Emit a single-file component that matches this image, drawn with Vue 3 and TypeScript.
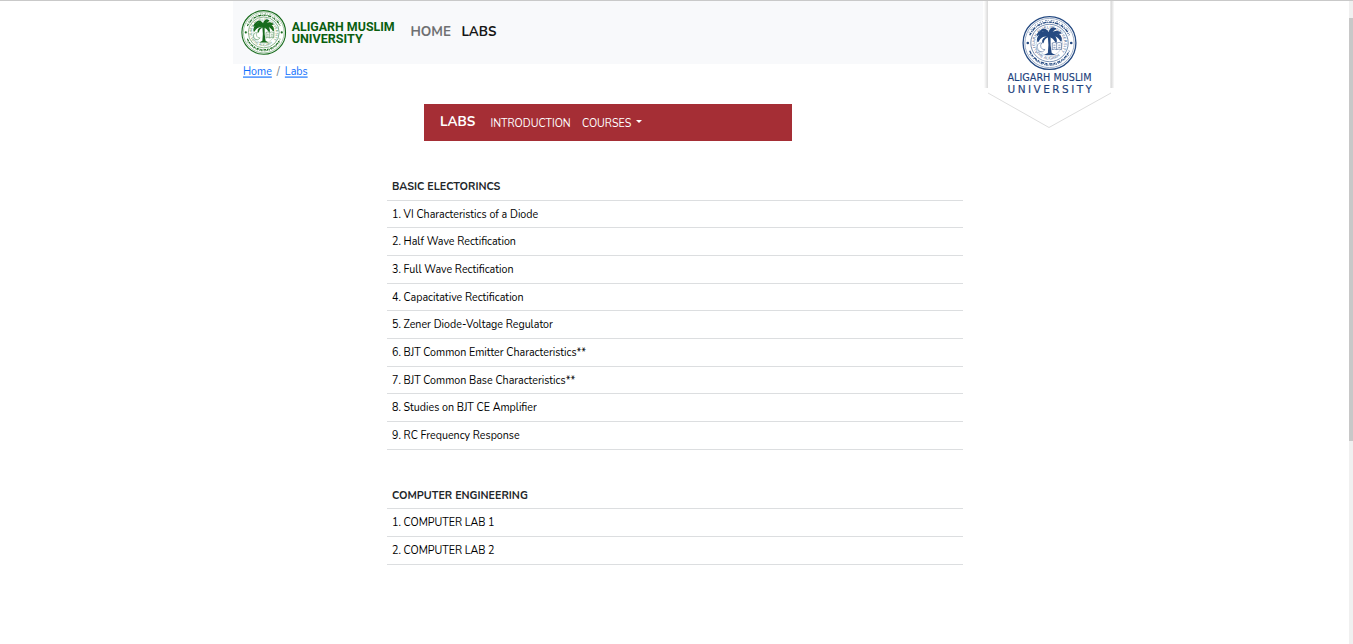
<script setup lang="ts">
interface Group { title: string; labs: string[] }

const groups: Group[] = [
  {
    title: 'BASIC ELECTORINCS',
    labs: [
      'VI Characteristics of a Diode',
      'Half Wave Rectification',
      'Full Wave Rectification',
      'Capacitative Rectification',
      'Zener Diode-Voltage Regulator',
      'BJT Common Emitter Characteristics**',
      'BJT Common Base Characteristics**',
      'Studies on BJT CE Amplifier',
      'RC Frequency Response',
    ],
  },
  {
    title: 'COMPUTER ENGINEERING',
    labs: ['COMPUTER LAB 1', 'COMPUTER LAB 2'],
  },
]
</script>

<template>
  <div class="page">
    <svg class="defs" width="0" height="0" aria-hidden="true">
      <defs>
        <path id="ringTop" d="M29.6 66.5A26.2 26.2 0 1 1 70.4 66.5" />
        <path id="ringBottom" d="M23.2 64A30.4 30.4 0 0 0 76.8 64" />
        <symbol id="seal" viewBox="0 0 100 100">
          <circle cx="50" cy="50" r="48" fill="#fff" stroke="currentColor" stroke-width="2.4" />
          <circle cx="50" cy="50" r="44.8" fill="none" stroke="currentColor" stroke-width="1" opacity=".8" />
          <circle cx="50" cy="50" r="34" fill="none" stroke="currentColor" stroke-width="1.3" opacity=".85" />
          <circle cx="50" cy="50" r="23.5" fill="none" stroke="currentColor" stroke-width="1" opacity=".4" />
          <g fill="none" stroke="currentColor">
            <path d="M14 36A39 39 0 0 1 86 36" stroke-width="2.4" stroke-dasharray="5 2 2 1.5 7 2 1 2" />
            <path d="M17 33A37 37 0 0 1 83 33" stroke-width="1.4" stroke-dasharray="2 3 4 2 1 3" />
            <path d="M13 31A42 42 0 0 1 87 31" stroke-width="1.4" stroke-dasharray="1.5 4 3 2" />
            <path d="M14 64A39 39 0 0 0 86 64" stroke-width="2.4" stroke-dasharray="6 2 3 1 1 2" />
            <path d="M16 68A37 37 0 0 0 84 68" stroke-width="1.4" stroke-dasharray="2 2 4 3" />
            <path d="M14 70A42 42 0 0 0 86 70" stroke-width="1.4" stroke-dasharray="3 3 1 2" />
          </g>
          <g fill="currentColor" font-family="DejaVu Sans, sans-serif" font-size="7" opacity=".85">
            <text textLength="116"><textPath href="#ringTop">ALIGARH MUSLIM UNIVERSITY</textPath></text>
            <text textLength="48"><textPath href="#ringBottom" startOffset="5">THE ALIGARH</textPath></text>
          </g>
          <circle cx="10.5" cy="50" r="2.4" fill="currentColor" />
          <circle cx="89.5" cy="50" r="2.4" fill="currentColor" />
          <path d="M36 50a8 8 0 1 0 6 12a7 7 0 0 1-6-12Z" fill="none" stroke="currentColor" stroke-width="1.2" opacity=".7" />
          <path d="M55 50q4-2 8 0q4-2 9 0v12q-5-2-9 0q-4-2-8 0ZM63 50v12M57 54h4M57 58h4M66 54h4M66 58h4" fill="none" stroke="currentColor" stroke-width="1.3" opacity=".75" />
          <path d="M47 39L52 38Q51 53 54 68L61 72H40L47 68Q49 53 47 39Z" fill="currentColor" />
          <path d="M49 38Q36 34 29 47Q27 37 36 34Q30 32 28 36Q30 28 39 30Q44 31 48 35Q41 24 34 28Q42 20 49 33Q51 20 61 24Q55 26 52 34Q62 25 70 32Q65 32 61 33Q72 34 71 46Q65 36 56 36Q63 40 62 48Q57 40 51 38Q41 38 38 49Q36 41 49 38Z" fill="currentColor" stroke="currentColor" stroke-width="2.6" stroke-linejoin="round" />
        </symbol>
      </defs>
    </svg>

    <header class="header">
      <a class="brand">
        <svg width="47" height="47" role="img">
          <use class="green" href="#seal" x="0" y="1.7" width="45.5" height="45.5" />
        </svg>
        <svg class="wordmark" width="108" height="47" role="img">
          <text x="3.7" y="23.2" textLength="103" lengthAdjust="spacingAndGlyphs">ALIGARH MUSLIM</text>
          <text x="3.7" y="35.3" textLength="71" lengthAdjust="spacingAndGlyphs">UNIVERSITY</text>
        </svg>
      </a>
      <nav class="primary">
        <a class="home">HOME</a>
        <a class="current">LABS</a>
      </nav>
    </header>

    <aside class="ribbon">
      <svg width="134" height="129" viewBox="0 0 134 129" role="img">
        <defs>
          <linearGradient id="edgeL"><stop offset="0" stop-color="#fff" /><stop offset="1" stop-color="#d9d9d9" /></linearGradient>
          <linearGradient id="edgeR"><stop offset="0" stop-color="#d2d2d2" /><stop offset="1" stop-color="#fff" /></linearGradient>
        </defs>
        <rect width="134" height="91" fill="#fff" />
        <rect x="1" width="4" height="87" fill="url(#edgeL)" />
        <rect x="127.5" width="4" height="87" fill="url(#edgeR)" />
        <path d="M5 92L66 126.5L128 92" fill="#fff" stroke="#dedede" />
        <use class="navy" href="#seal" x="39" y="14.5" width="55" height="55" />
        <g class="crest">
          <text x="24.5" y="80" textLength="84" lengthAdjust="spacingAndGlyphs">ALIGARH MUSLIM</text>
          <text x="24.5" y="91.6" textLength="84.5">UNIVERSITY</text>
        </g>
      </svg>
    </aside>

    <nav class="crumbs"><a>Home</a><span>/</span><a>Labs</a></nav>

    <nav class="labbar">
      <strong>LABS</strong>
      <a class="intro">INTRODUCTION</a>
      <a class="courses">COURSES</a>
      <i class="caret"></i>
    </nav>

    <main>
      <section v-for="group in groups" :key="group.title">
        <h2><span class="tall">{{ group.title }}</span></h2>
        <div v-for="(item, i) in group.labs" :key="item" class="row">
          <span class="tall">{{ i + 1 }}. {{ item }}</span>
        </div>
      </section>
    </main>

    <div class="track"><div class="thumb"></div></div>
  </div>
</template>

<style>
body { margin: 0; background: #fff; overflow: hidden; }
</style>

<style scoped>
.page {
  position: relative;
  box-sizing: border-box;
  height: 644px;
  border-top: 1px solid #c9c9c9;
  font-family: Nunito, "Noto Sans", sans-serif;
  font-size: 10.67px;
  color: #000;
  overflow: hidden;
}
.defs { position: absolute; }
.header {
  display: flex;
  width: 750px;
  height: 63px;
  margin-left: 233px;
  background: #f8f9fb;
}
.brand { display: flex; margin: 7px 0 0 8px; height: 48px; }
.brand svg, .ribbon svg { display: block; }
.green { color: #176b1c; }
.navy { color: #254a82; }
.wordmark { overflow: visible; font: 700 13.3px Roboto, sans-serif; fill: #0b5e10; }
.crest { font: 10.5px "DejaVu Sans", sans-serif; fill: #1d427c; stroke: #1d427c; stroke-width: .15px; }
.primary { display: flex; gap: 10.5px; margin-left: 14.5px; padding-top: 21px; font-size: 13.4px; line-height: 20px; font-weight: 700; }
.home { color: #6f7072; }
.current { color: #161616; }
.ribbon { position: absolute; top: 0; left: 983px; }
.crumbs { display: flex; gap: 5px; height: 16px; margin-left: 243px; line-height: 16px; }
.crumbs a { color: #0d6efd; text-decoration: underline; }
.crumbs span { color: #6c757d; }
.crumbs a, .crumbs span, .labbar a, .tall { transform: scaleY(1.13); }
.tall { display: inline-block; }
.labbar {
  display: flex;
  align-items: center;
  box-sizing: border-box;
  width: 368px;
  height: 37px;
  margin: 24px 0 0 424px;
  padding: 0 16px 2px;
  background: #a52e35;
  color: #fff;
}
.labbar strong { width: 50.5px; font-size: 13.5px; }
.labbar a { padding-top: 2px; color: #fff; }
.intro { width: 91.5px; white-space: nowrap; }
.caret { margin-left: 4.5px; border: 3px solid transparent; border-top-color: #fff; border-bottom: 0; }
main { width: 576px; margin: 32px 0 0 387px; }
section { margin-bottom: 31.95px; }
h2 { box-sizing: border-box; height: 27.7px; margin: 0; padding: 0 5px; border-bottom: 1px solid #dcdee0; font-size: 10.75px; line-height: 27px; color: #212529; }
.row { box-sizing: border-box; height: 27.67px; padding: 0 5px; border-bottom: 1px solid #dcdee0; line-height: 28px; white-space: nowrap; }
.track { position: absolute; top: 0; right: 0; width: 4px; height: 644px; background: #f0f0f0; }
.thumb { height: 423px; margin-top: 17px; background: #c8c8c8; }
</style>
